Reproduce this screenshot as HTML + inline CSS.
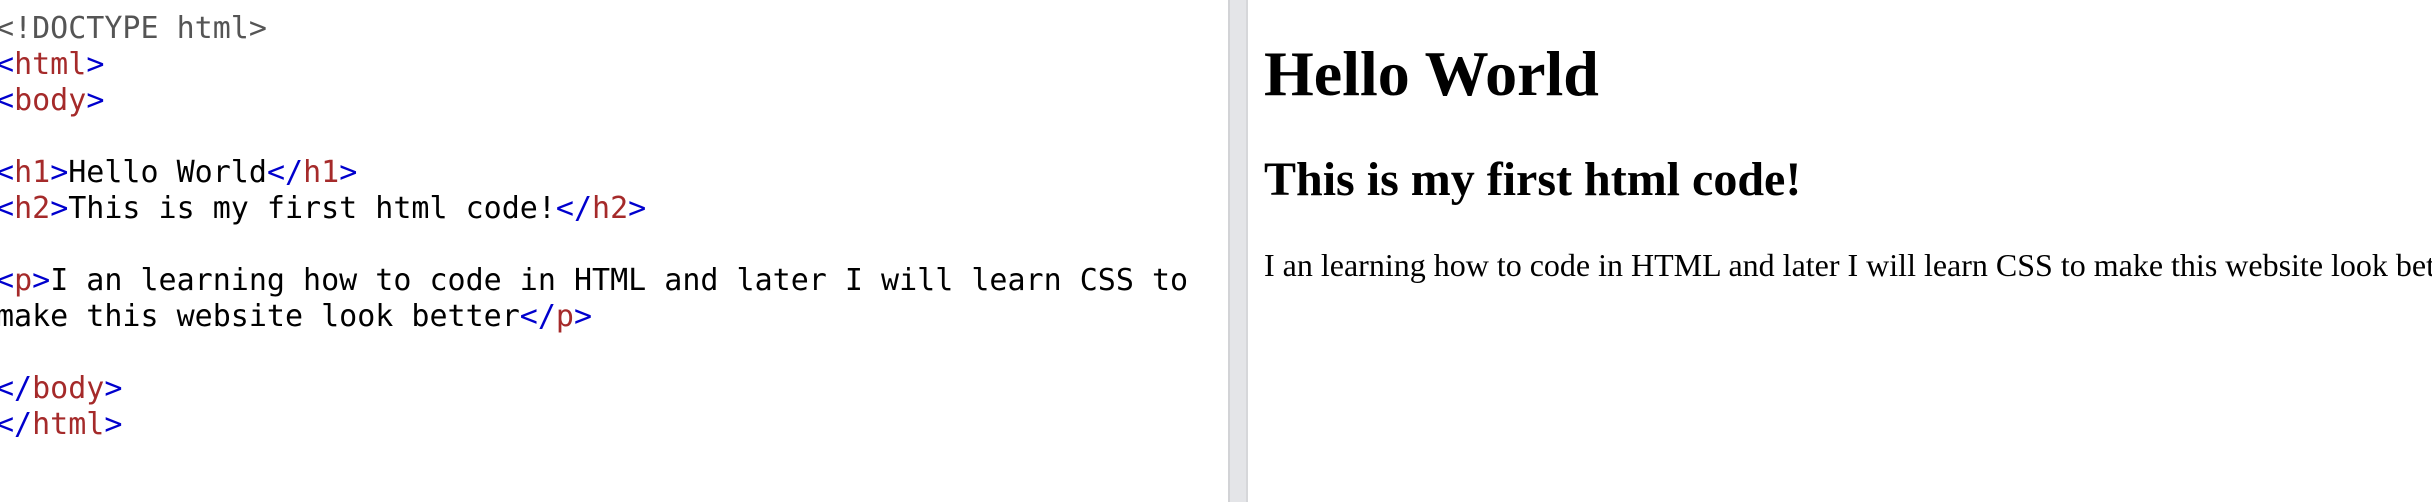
<!DOCTYPE html>
<html><head><style>
body{margin:0;width:2432px;height:502px;overflow:hidden;background:#fff;position:relative}
.code{position:absolute;left:-4px;top:11px;font-family:"DejaVu Sans Mono","Liberation Mono",monospace;font-size:30px;line-height:36px;white-space:pre;color:#000;width:1228px;overflow:hidden}
.t{color:#0000cd}.n{color:#a52a2a}.d{color:#555}
.div{position:absolute;left:1228px;top:0;width:20px;height:502px;background:#e4e5e8;box-shadow:inset 2px 0 0 #d2d3d6,inset -2px 0 0 #d6d7da}
.r{position:absolute;left:1264px;font-family:"Liberation Serif",serif;white-space:nowrap;color:#000}
</style></head><body>
<div class="code"><span class="d">&lt;!DOCTYPE html&gt;</span>
<span class="t">&lt;</span><span class="n">html</span><span class="t">&gt;</span>
<span class="t">&lt;</span><span class="n">body</span><span class="t">&gt;</span>

<span class="t">&lt;</span><span class="n">h1</span><span class="t">&gt;</span>Hello World<span class="t">&lt;/</span><span class="n">h1</span><span class="t">&gt;</span>
<span class="t">&lt;</span><span class="n">h2</span><span class="t">&gt;</span>This is my first html code!<span class="t">&lt;/</span><span class="n">h2</span><span class="t">&gt;</span>

<span class="t">&lt;</span><span class="n">p</span><span class="t">&gt;</span>I an learning how to code in HTML and later I will learn CSS to
make this website look better<span class="t">&lt;/</span><span class="n">p</span><span class="t">&gt;</span>

<span class="t">&lt;/</span><span class="n">body</span><span class="t">&gt;</span>
<span class="t">&lt;/</span><span class="n">html</span><span class="t">&gt;</span></div>
<div class="div"></div>
<div class="r" style="top:37px;font-size:64px;font-weight:bold;line-height:74px">Hello World</div>
<div class="r" style="top:152px;font-size:48px;font-weight:bold;line-height:56px">This is my first html code!</div>
<div class="r" style="top:247px;font-size:32px;line-height:37px">I an learning how to code in HTML and later I will learn CSS to make this website look better</div>
</body></html>
